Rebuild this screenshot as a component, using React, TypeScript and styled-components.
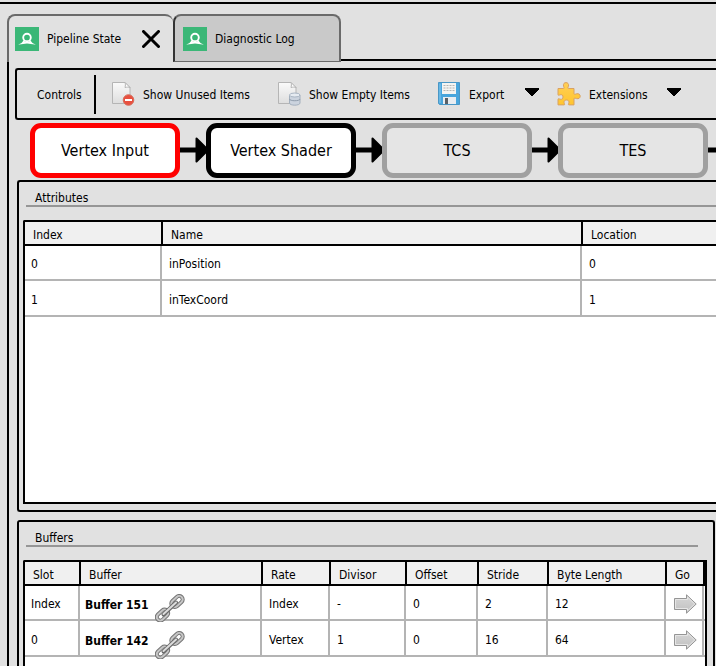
import React from 'react';
import styled, { createGlobalStyle } from 'styled-components';

const GlobalStyle = createGlobalStyle`
  * { box-sizing: border-box; }
  html, body, #root { height: 100%; margin: 0; }
  body {
    background: #e1e1e1;
    color: #000;
    font: 12px/16px 'DejaVu Sans Condensed', 'Noto Sans', sans-serif;
    overflow: hidden;
  }
  button { font: inherit; color: inherit; background: none; border: 0; padding: 0; margin: 0; }
  svg { display: block; flex: none; }
`;

const Window = styled.div`
  display: flex;
  flex-direction: column;
  min-height: 100%;
  padding-left: 7px;
`;

const TopRule = styled.div`
  height: 2px;
  margin: 2px 0 10px -7px;
  background: #000;
`;

const TabBar = styled.div`
  display: flex;
  height: 48px;
`;

const Tab = styled.div<{ $active?: boolean }>`
  display: flex;
  align-items: center;
  gap: 8px;
  width: ${p => (p.$active ? 166 : 168)}px;
  padding: 0 ${p => (p.$active ? 13 : 8)}px 0 ${p => (p.$active ? 6 : 8)}px;
  border: 2px solid #6a6a6a;
  border-bottom: ${p => (p.$active ? '0' : '1px solid #6a6a6a')};
  border-left-color: ${p => (p.$active ? '#6a6a6a' : '#333')};
  border-right-width: ${p => (p.$active ? 0 : 2)}px;
  border-radius: 8px 8px 0 0;
  background: ${p => (p.$active ? '#e1e1e1' : '#c9c9c9')};
`;

const TabButton = styled.button`
  display: flex;
  flex: 1;
  align-items: center;
  gap: 8px;
  white-space: nowrap;
`;

const TabFill = styled.div`
  flex: 1;
  height: 47px;
  border-bottom: 2px solid #000;
`;

const Pane = styled.main`
  display: flex;
  flex: 1;
  flex-direction: column;
  border-left: 2px solid #000;
  padding: 6px 0 0 6px;
`;

const Toolbar = styled.div`
  display: flex;
  align-items: center;
  height: 52px;
  padding-left: 20px;
  border: 2px solid #000;
  border-right: 0;
  border-radius: 3px 0 0 3px;
  white-space: nowrap;
`;

const ToolbarLabel = styled.span`
  width: 57px;
  padding-top: 2px;
`;

const Separator = styled.span`
  width: 2px;
  height: 39px;
  background: #000;
`;

const ToolButton = styled.button<{ $width: number; $before?: number }>`
  display: flex;
  align-items: center;
  gap: 8px;
  width: ${p => p.$width}px;
  margin-left: ${p => p.$before ?? 0}px;
  white-space: nowrap;
`;

const ToolText = styled.span`
  padding-top: 2px;
`;

const Caret = styled.svg`
  margin: -4px 0 0 auto;
`;

const Pipeline = styled.div`
  display: flex;
  flex: none;
  align-items: center;
  height: 60px;
  padding-left: 15px;
`;

const stageColors = {
  selected: ['#f00', '#fff'],
  active: ['#000', '#fff'],
  disabled: ['#a0a0a0', '#e5e5e5'],
} as const;

const Stage = styled.button<{ $state: keyof typeof stageColors }>`
  flex: none;
  width: 150px;
  height: 55px;
  padding-top: 1px;
  border: 5px solid ${p => stageColors[p.$state][0]};
  border-radius: 11px;
  background: ${p => stageColors[p.$state][1]};
  font-size: 16px;
  line-height: 20px;
`;

const StageLink = styled.svg`
  overflow: hidden;
`;

const Group = styled.section<{ $closed?: boolean }>`
  display: flex;
  flex-direction: column;
  flex: ${p => (p.$closed ? '1' : '0 0 332px')};
  margin: 0 ${p => (p.$closed ? 1 : 0)}px ${p => (p.$closed ? 0 : 8)}px 2px;
  padding: 7px ${p => (p.$closed ? 6 : 0)}px ${p => (p.$closed ? 0 : 6)}px 4px;
  border: 2px solid #000;
  border-right-width: ${p => (p.$closed ? 2 : 0)}px;
  border-bottom-width: ${p => (p.$closed ? 0 : 2)}px;
  border-radius: ${p => (p.$closed ? '3px 3px 0 0' : '3px 0 0 3px')};
`;

const GroupTitle = styled.h2<{ $inset?: boolean }>`
  height: 18px;
  margin: 0 ${p => (p.$inset ? 9 : 0)}px 13px 3px;
  padding-left: 9px;
  border-bottom: 2px solid #969696;
  font-size: 12px;
  font-weight: normal;
  line-height: 18px;
`;

const GridFrame = styled.div<{ $closed?: boolean }>`
  flex: 1;
  border: 2px solid #000;
  border-right-width: ${p => (p.$closed ? 2 : 0)}px;
  border-bottom-width: ${p => (p.$closed ? 0 : 2)}px;
  border-radius: 2px 0 0 0;
  background: #fff;
`;

const Table = styled.table<{ $open?: boolean }>`
  width: 100%;
  border-spacing: 0;
  table-layout: fixed;
  th:last-child { border-right-width: ${p => (p.$open ? 0 : 2)}px; }
  td:last-child { ${p => (p.$open ? 'background: none;' : '')} }
`;

const Head = styled.th<{ $width?: number }>`
  width: ${p => (p.$width ? `${p.$width}px` : 'auto')};
  height: 24px;
  padding: 4px 0 0 8px;
  border-right: 2px solid #000;
  border-bottom: 2px solid #000;
  background: #f0f0f0;
  font-weight: normal;
  text-align: left;
`;

const Cell = styled.td<{ $tight?: boolean }>`
  height: 36px;
  padding: 4px 0 0 ${p => (p.$tight ? 4 : 6)}px;
  border-bottom: 2px solid #b4b4b4;
  background: linear-gradient(#b4b4b4, #b4b4b4) right 1px top 0 / 2px 100% no-repeat;
`;

const Row = styled.tr`
  &:first-child td {
    height: 35px;
    padding-top: 2px;
  }
`;

const ResourceLink = styled.a`
  display: flex;
  align-items: center;
  gap: 6px;
  height: 20px;
  padding-top: 2px;
  color: inherit;
  font-weight: bold;
  text-decoration: none;
  svg { margin: 5px 0 -2px; }
`;

const GoButton = styled.button`
  display: block;
  margin-left: 1px;
`;

const AppIcon = () => (
  <svg width="24" height="24" viewBox="0 0 24 24">
    <rect width="24" height="24" fill="#3bb777" />
    <circle cx="12" cy="10.5" r="3.8" fill="none" stroke="#fff" strokeWidth="1.900" />
    <path d="M3.200 17.500c2.800-.9 4.300-2 5.200-4.300l2 1.600h3.200l2-1.600c.9 2.300 2.400 3.400 5.200 4.300-3.300.3-5.800-.9-8.800-.9s-5.500 1.200-8.800.9z" fill="#fff" />
  </svg>
);

const CloseIcon = () => (
  <svg width="18" height="18" viewBox="0 0 18 18">
    <path d="M1.500 1.500l15 15m0-15l-15 15" stroke="#000" strokeWidth="3" strokeLinecap="round" />
  </svg>
);

const Page = () => (
  <>
    <defs>
      <linearGradient id="page" x1="0" y1="0" x2="0" y2="1">
        <stop offset="0" stopColor="#fafafa" />
        <stop offset="1" stopColor="#dedede" />
      </linearGradient>
    </defs>
    <path d="M1.500.500h12.500l5 5v16h-17.500z" fill="url(#page)" stroke="#b5b5b5" />
    <path d="M14 .500c.6 1.800.5 3 0 5 2-.5 3.300-.5 5 0z" fill="#fff" stroke="#b5b5b5" />
  </>
);

const UnusedIcon = () => (
  <svg width="24" height="24" viewBox="0 0 24 24">
    <Page />
    <circle cx="17.500" cy="18" r="5.300" fill="#e8503f" stroke="#d5705f" />
    <rect x="14" y="17" width="7" height="2" fill="#fff" />
  </svg>
);

const EmptyIcon = () => (
  <svg width="24" height="24" viewBox="0 0 24 24">
    <Page />
    <path d="M12.500 13v8c0 2.900 10.500 2.900 10.500 0v-8z" fill="#cbd3de" stroke="#a3afbd" />
    <path d="M12.500 17c0 2.300 10.500 2.300 10.500 0" fill="none" stroke="#909dac" />
    <ellipse cx="17.750" cy="13" rx="5.250" ry="2" fill="#e6ebf1" stroke="#a9b5c3" />
  </svg>
);

const SaveIcon = () => (
  <svg width="24" height="24" viewBox="0 0 24 24">
    <path d="M1.500.500h21v22H2.500l-1-1z" fill="#48a5dc" stroke="#4a97c6" />
    <path d="M3 1.500v19.500" stroke="#86caef" />
    <rect x="5" y="1" width="14" height="11" fill="#f4f4f2" />
    <path d="M6.500 3.500h11m-11 2.500h11m-11 2.500h11" stroke="#b4b4b4" strokeDasharray="2 1" />
    <rect x="6" y="15" width="13" height="7" fill="#e9edf1" />
    <rect x="8" y="16" width="3" height="6" fill="#5a6066" />
  </svg>
);

const PuzzleIcon = () => (
  <svg width="24" height="24" viewBox="0 0 24 24">
    <defs>
      <linearGradient id="puzzle" x1="0" y1="0" x2="0" y2="1">
        <stop offset="0" stopColor="#ffcf55" />
        <stop offset="1" stopColor="#ffc52e" />
      </linearGradient>
    </defs>
    <path
      d="M1 6.500H6.500c1.200 0 .2-1.500 0-2.500C6.100 1.800 7.300.600 9 .600s2.900 1.200 2.500 3.400c-.2 1-1.200 2.500 0 2.500h5.500v5c0 1.300 1.500.6 2.500.3 2.200-.6 3.700.7 3.700 2.400s-1.500 3-3.700 2.400c-1-.3-2.500-1-2.500.3v6h-5c-1.200 0-.4-1.300-.1-2.200.4-1.600-.9-2.700-2.400-2.700s-2.800 1.100-2.400 2.700c.3.900 1.100 2.200-.1 2.200H1v-5.500c0-1.200 1.300-.5 2.200-.2 1.600.5 2.800-.5 2.800-2.200s-1.200-2.700-2.800-2.200c-.9.300-2.200 1-2.200-.2z"
      fill="url(#puzzle)" stroke="#d9a163"
    />
  </svg>
);

const DownCaret = () => (
  <Caret width="14" height="8" viewBox="0 0 14 8">
    <path d="M0 0h14v2h-1v1h-1v1h-1v1h-1v1H9v1H8v1H6V7H5V6H4V5H3V4H2V3H1V2H0z" fill="#000" />
  </Caret>
);

const Arrow = () => (
  <StageLink width="26" height="28" viewBox="0 0 26 28">
    <path d="M0 14h16" stroke="#000" strokeWidth="5" />
    <path d="M16.500 2.500L28 14 16.500 25.500z" fill="#000" stroke="#000" strokeWidth="2" strokeLinejoin="round" />
  </StageLink>
);

const chainLinks = (
  <>
    <rect x="-6.500" y="-3.500" width="13" height="7" rx="3.500" transform="translate(22 7.500) rotate(-43)" />
    <rect x="-6.500" y="-3.500" width="13" height="7" rx="3.500" transform="translate(7.500 21) rotate(-43)" />
  </>
);

const ChainIcon = () => (
  <svg width="30" height="28" viewBox="0 0 30 28">
    <g fill="none" strokeLinecap="round">
      <g stroke="#747474" strokeWidth="4">{chainLinks}</g>
      <g stroke="#c6c6c6" strokeWidth="2">{chainLinks}</g>
      <path d="M8.500 20.500l12.500-12" stroke="#6a6a6a" strokeWidth="4" />
      <path d="M8.500 20l12.500-11.500" stroke="#dcdcdc" strokeWidth="2" />
    </g>
  </svg>
);

const GoIcon = () => (
  <svg width="23" height="20" viewBox="0 0 23 20">
    <defs>
      <linearGradient id="go" x1="0" y1="0" x2="0" y2="1">
        <stop offset="0" stopColor="#d8d8d8" />
        <stop offset="1" stopColor="#c0c0c0" />
      </linearGradient>
    </defs>
    <path d="M.500 4.500h12V.800L22.200 10l-9.700 9.200v-3.700H.500z" fill="url(#go)" stroke="#959595" />
    <path d="M1.500 14.500v-9h12V3.200L20.700 10l-7.200 6.800v-2.300z" fill="none" stroke="#e6e6e6" />
  </svg>
);

const attributes = [
  ['0', 'inPosition', '0'],
  ['1', 'inTexCoord', '1'],
];

const buffers = [
  { slot: 'Index', name: 'Buffer 151', values: ['Index', '-', '0', '2', '12'] },
  { slot: '0', name: 'Buffer 142', values: ['Vertex', '1', '0', '16', '64'] },
];

export default function App() {
  return (
    <>
      <GlobalStyle />
      <Window>
        <TopRule />
        <TabBar>
          <Tab $active>
            <TabButton><AppIcon />Pipeline State</TabButton>
            <button aria-label="Close tab"><CloseIcon /></button>
          </Tab>
          <Tab>
            <TabButton><AppIcon />Diagnostic Log</TabButton>
          </Tab>
          <TabFill />
        </TabBar>
        <Pane>
          <Toolbar>
            <ToolbarLabel>Controls</ToolbarLabel>
            <Separator />
            <ToolButton $width={140} $before={15}><UnusedIcon /><ToolText>Show Unused Items</ToolText></ToolButton>
            <ToolButton $width={134} $before={26}><EmptyIcon /><ToolText>Show Empty Items</ToolText></ToolButton>
            <ToolButton $width={102} $before={26}><SaveIcon /><ToolText>Export</ToolText><DownCaret /></ToolButton>
            <ToolButton $width={124} $before={18}><PuzzleIcon /><ToolText>Extensions</ToolText><DownCaret /></ToolButton>
          </Toolbar>
          <Pipeline>
            <Stage $state="selected">Vertex Input</Stage>
            <Arrow />
            <Stage $state="active">Vertex Shader</Stage>
            <Arrow />
            <Stage $state="disabled">TCS</Stage>
            <Arrow />
            <Stage $state="disabled">TES</Stage>
            <Arrow />
          </Pipeline>
          <Group>
            <GroupTitle>Attributes</GroupTitle>
            <GridFrame>
              <Table $open>
                <thead>
                  <tr>
                    <Head $width={138}>Index</Head>
                    <Head>Name</Head>
                    <Head $width={133}>Location</Head>
                  </tr>
                </thead>
                <tbody>
                  {attributes.map(row => (
                    <Row key={row[0]}>
                      {row.map((value, i) => <Cell key={i}>{value}</Cell>)}
                    </Row>
                  ))}
                </tbody>
              </Table>
            </GridFrame>
          </Group>
          <Group $closed>
            <GroupTitle $inset>Buffers</GroupTitle>
            <GridFrame $closed>
              <Table>
                <thead>
                  <tr>
                    <Head $width={56}>Slot</Head>
                    <Head>Buffer</Head>
                    <Head $width={68}>Rate</Head>
                    <Head $width={76}>Divisor</Head>
                    <Head $width={72}>Offset</Head>
                    <Head $width={70}>Stride</Head>
                    <Head $width={118}>Byte Length</Head>
                    <Head $width={38}>Go</Head>
                  </tr>
                </thead>
                <tbody>
                  {buffers.map(row => (
                    <Row key={row.name}>
                      <Cell>{row.slot}</Cell>
                      <Cell $tight><ResourceLink href="#">{row.name}<ChainIcon /></ResourceLink></Cell>
                      {row.values.map((value, i) => <Cell key={i}>{value}</Cell>)}
                      <Cell><GoButton aria-label={`Go to ${row.name}`}><GoIcon /></GoButton></Cell>
                    </Row>
                  ))}
                </tbody>
              </Table>
            </GridFrame>
          </Group>
        </Pane>
      </Window>
    </>
  );
}
